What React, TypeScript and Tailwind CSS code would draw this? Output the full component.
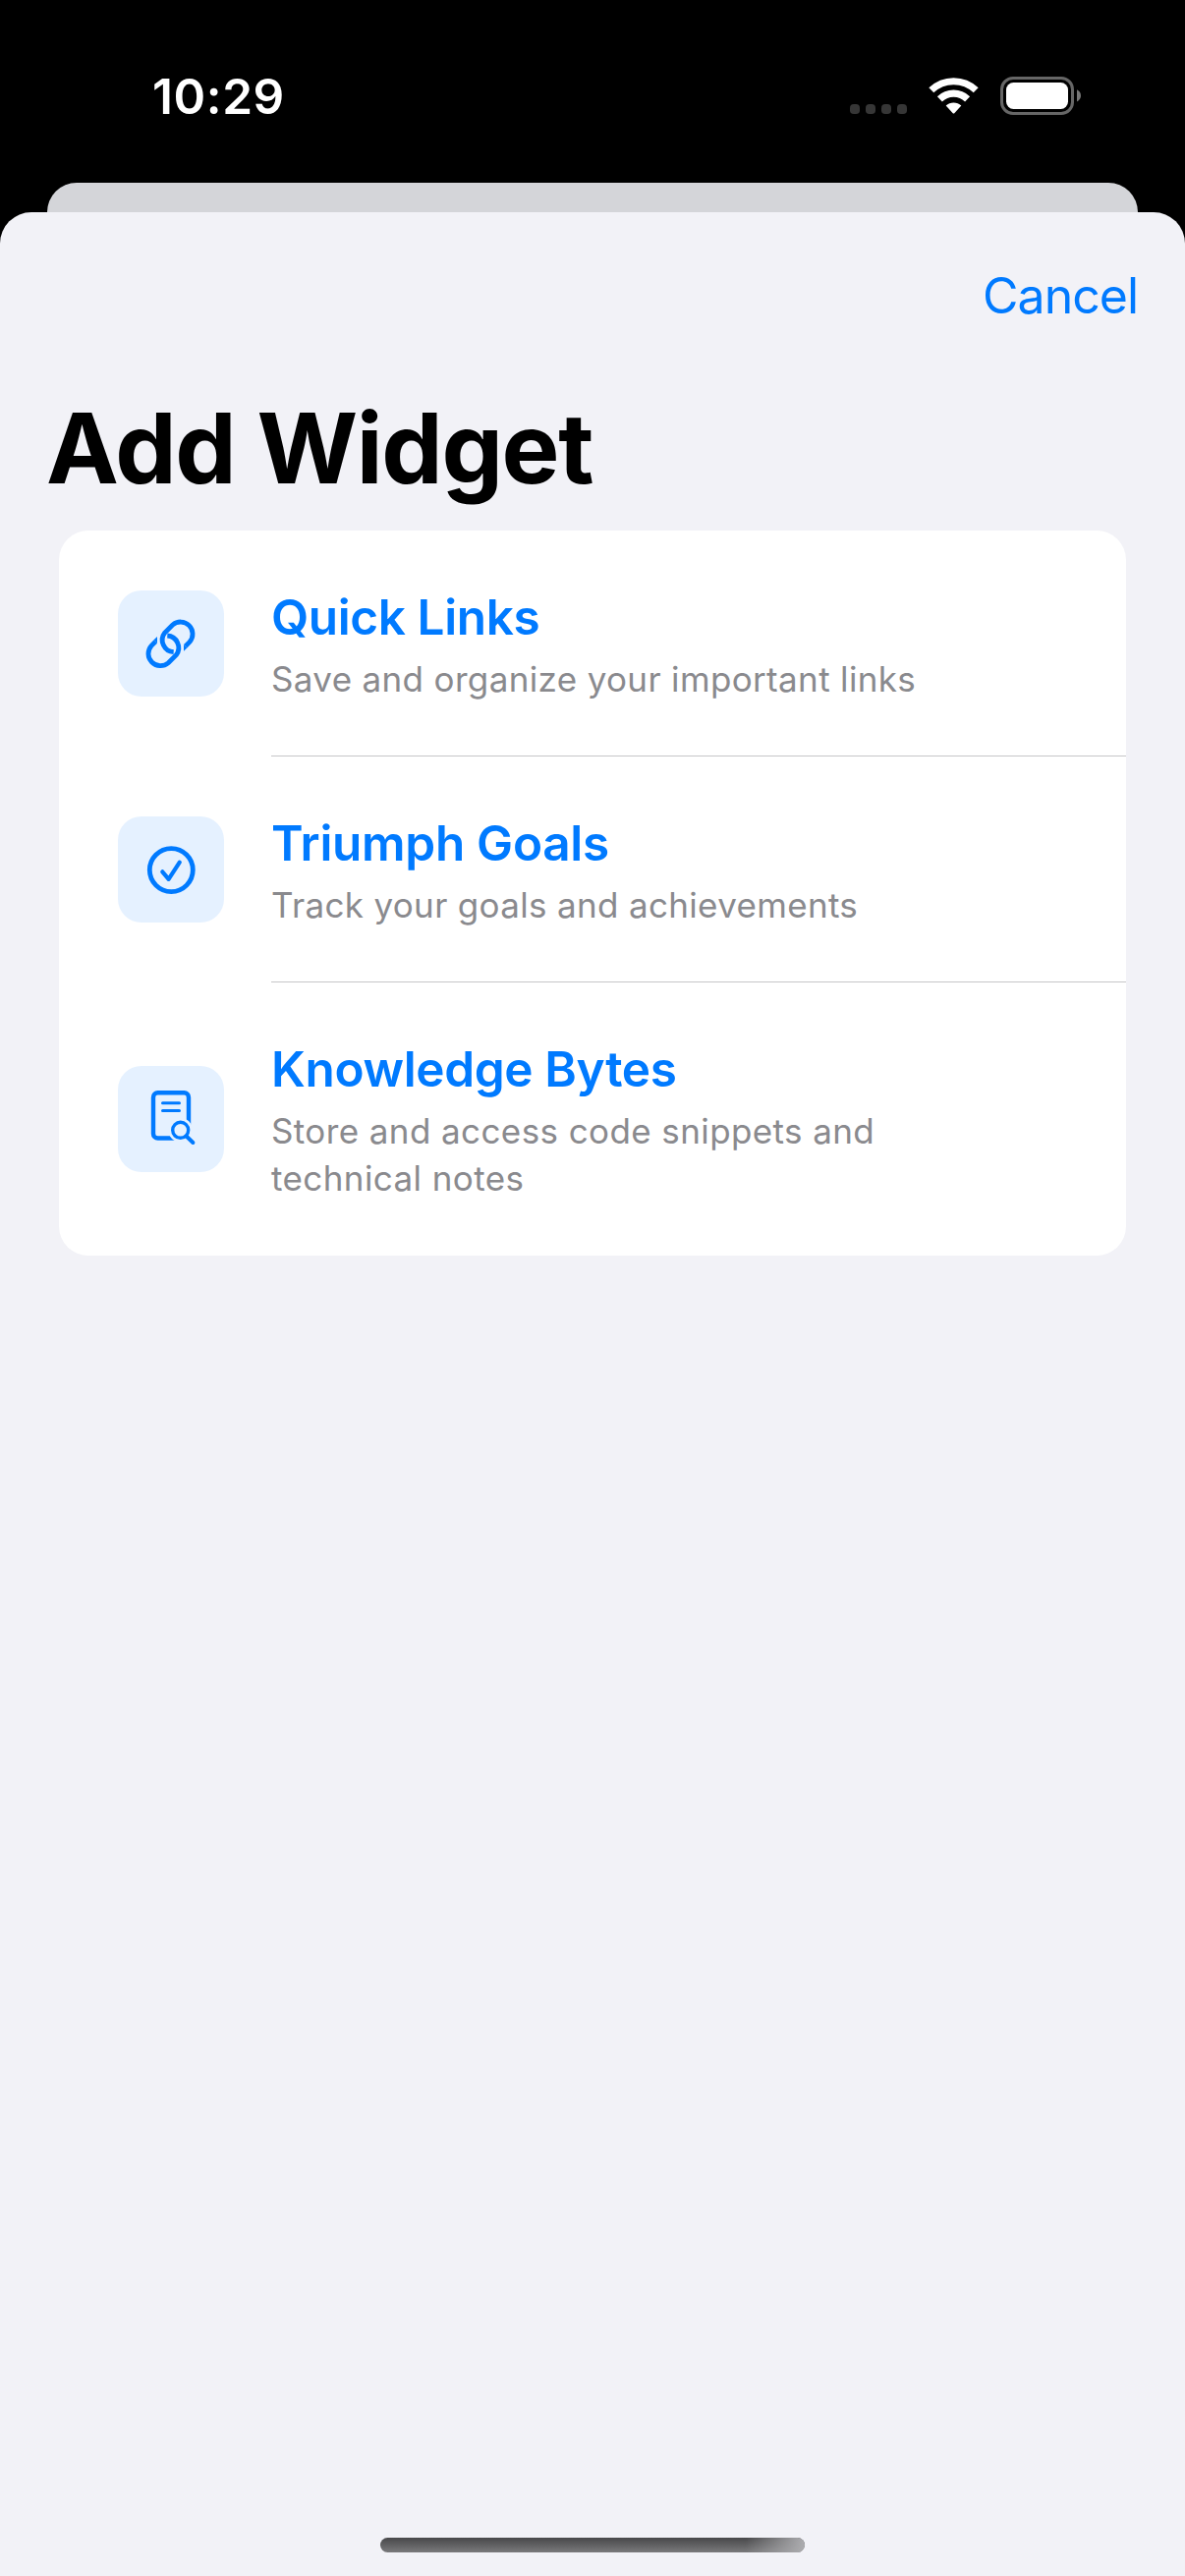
import React from "react";

type Widget = { title: string; lines: string[]; icon: React.ReactNode; titleClass: string; textClass: string };

const LinkIcon = () => (
  <svg viewBox="0 0 108 108" className="size-[108px]">
    <g fill="none" stroke="#007aff" strokeWidth="4.8">
      <path d="M50.3 46 A12.3 12.3 0 0 1 59.3 65.7 L51.3 73.7 A12.3 12.3 0 0 1 34 56.3 L38.3 52" />
      <path d="M56.7 62.700 A12.3 12.3 0 0 1 47.7 43 L55.7 35 A12.3 12.3 0 0 1 73 52.4 L68.7 56.7" />
    </g>
    <path d="M36.600 50.300 L40 46.900 V53.700 Z M70.400 58.400 L67 61.800 V55 Z" fill="#007aff" />
  </svg>
);

const CheckIcon = () => (
  <svg viewBox="0 0 108 108" className="size-[108px]" fill="none" stroke="#007aff" strokeLinecap="round" strokeLinejoin="round">
    <circle cx="54.300" cy="54.600" r="22" strokeWidth="4.800" />
    <path d="M45.300 56.300 L51.600 63.800 L62.800 46.700" strokeWidth="4.200" />
  </svg>
);

const DocSearchIcon = () => (
  <svg viewBox="0 0 108 108" className="size-[108px]" fill="none" stroke="#007aff">
    <rect x="36" y="27.300" width="36" height="46.200" rx="4.600" strokeWidth="4.400" />
    <path d="M45.500 37.700 H62.500 M45.500 45.600 H62.500" strokeWidth="3" strokeLinecap="round" />
    <path d="M63.700 65.300 L78 79" stroke="#e5f1ff" strokeWidth="9" />
    <circle cx="63.700" cy="65.300" r="12.400" fill="#e5f1ff" stroke="none" />
    <circle cx="63.700" cy="65.300" r="8" strokeWidth="3.400" />
    <path d="M69.700 71.500 L76.400 78" strokeWidth="4" strokeLinecap="round" />
  </svg>
);

const widgets: Widget[] = [
  { title: "Quick Links", lines: ["Save and organize your important links"], icon: <LinkIcon />, titleClass: "tracking-[-0.4px]", textClass: "tracking-[0.35px]" },
  { title: "Triumph Goals", lines: ["Track your goals and achievements"], icon: <CheckIcon />, titleClass: "tracking-[-0.3px]", textClass: "tracking-[0.33px]" },
  { title: "Knowledge Bytes", lines: ["Store and access code snippets and", "technical notes"], icon: <DocSearchIcon />, titleClass: "tracking-[-0.35px]", textClass: "tracking-[0.4px]" },
];

function StatusBar() {
  return (
    <header className="flex h-[186px] justify-between pl-[155px] pr-[100px] text-white">
      <div className="pt-[68px] text-[49.5px] font-semibold leading-[60px] tracking-[0.6px]">10:29</div>
      <svg viewBox="0 0 240 100" className="mt-[50px] h-[100px] w-[240px] overflow-visible">
        {[-1, 15, 31, 47].map((x) => (
          <rect key={x} x={x} y="56" width="10" height="10" rx="3.8" fill="#363636" />
        ))}
        <g fill="none" stroke="#fff">
          <path d="M81.800 41.800 A32.850 32.850 0 0 1 127.200 41.800" strokeWidth="7.100" />
          <path d="M90.400 50.800 A20.350 20.350 0 0 1 118.600 50.800" strokeWidth="7.200" />
        </g>
        <path d="M96.700 57.500 A11.300 11.300 0 0 1 112.300 57.500 L105.300 65.200 Q104.500 66 103.700 65.200 Z" fill="#fff" />
        <rect x="153.500" y="29.500" width="72" height="36" rx="11.500" fill="none" stroke="#666" strokeWidth="3" />
        <rect x="158" y="34" width="63" height="27" rx="7.500" fill="#fff" />
        <path d="M230 41.200 Q234 43.200 234 47.300 Q234 51.400 230 53.400 Z" fill="#777" />
      </svg>
    </header>
  );
}

function WidgetRow({ widget, last }: { widget: Widget; last: boolean }) {
  return (
    <li className={last ? "flex h-[278px] items-stretch pl-[60px]" : "flex h-[230px] items-stretch pl-[60px]"}>
      <div className="mr-12 flex items-center">
        <div className="size-[108px] rounded-[24px] bg-[#e5f1ff]">{widget.icon}</div>
      </div>
      <div className={last ? "flex-1 pt-[58px]" : "flex-1 border-b border-[#c6c6c8] pt-[58px]"}>
        <h2 className={"text-[49.5px] font-semibold leading-[60px] text-[#007aff] " + widget.titleClass}>{widget.title}</h2>
        <p className={"mt-[9px] text-[35px] leading-[48px] text-[#8a8a8e] " + widget.textClass}>
          {widget.lines.map((line) => (
            <span key={line} className="block whitespace-nowrap">{line}</span>
          ))}
        </p>
      </div>
    </li>
  );
}

export default function App() {
  return (
    <div className="flex h-[2622px] w-[1206px] flex-col overflow-hidden bg-black font-['Inter',sans-serif]">
      <StatusBar />
      <div className="mx-12 h-[30px] rounded-t-[30px] bg-[#d4d5d9]" />
      <main className="flex flex-1 flex-col rounded-t-[32px] bg-[#f2f2f7]">
        <div className="flex justify-end pr-12 pt-[55px]">
          <button className="text-[50px] leading-[60px] tracking-[-1px] text-[#007aff]">Cancel</button>
        </div>
        <h1 className="ml-[47px] mt-[65px] text-[99px] font-bold leading-[120px] tracking-[-1.35px] text-black">Add Widget</h1>
        <ul className="mx-[60px] mt-[24px] overflow-hidden rounded-[30px] bg-white">
          {widgets.map((widget, i) => (
            <WidgetRow key={widget.title} widget={widget} last={i === widgets.length - 1} />
          ))}
        </ul>
        <div className="mx-auto mb-6 mt-auto h-[15px] w-[432px] rounded-full bg-linear-to-b from-[#48484a] to-[#7a7a7c]">
          <div className="ml-auto h-full w-[60px] rounded-r-full bg-linear-to-r from-[#adadb0]/0 to-[#adadb0]" />
        </div>
      </main>
    </div>
  );
}
